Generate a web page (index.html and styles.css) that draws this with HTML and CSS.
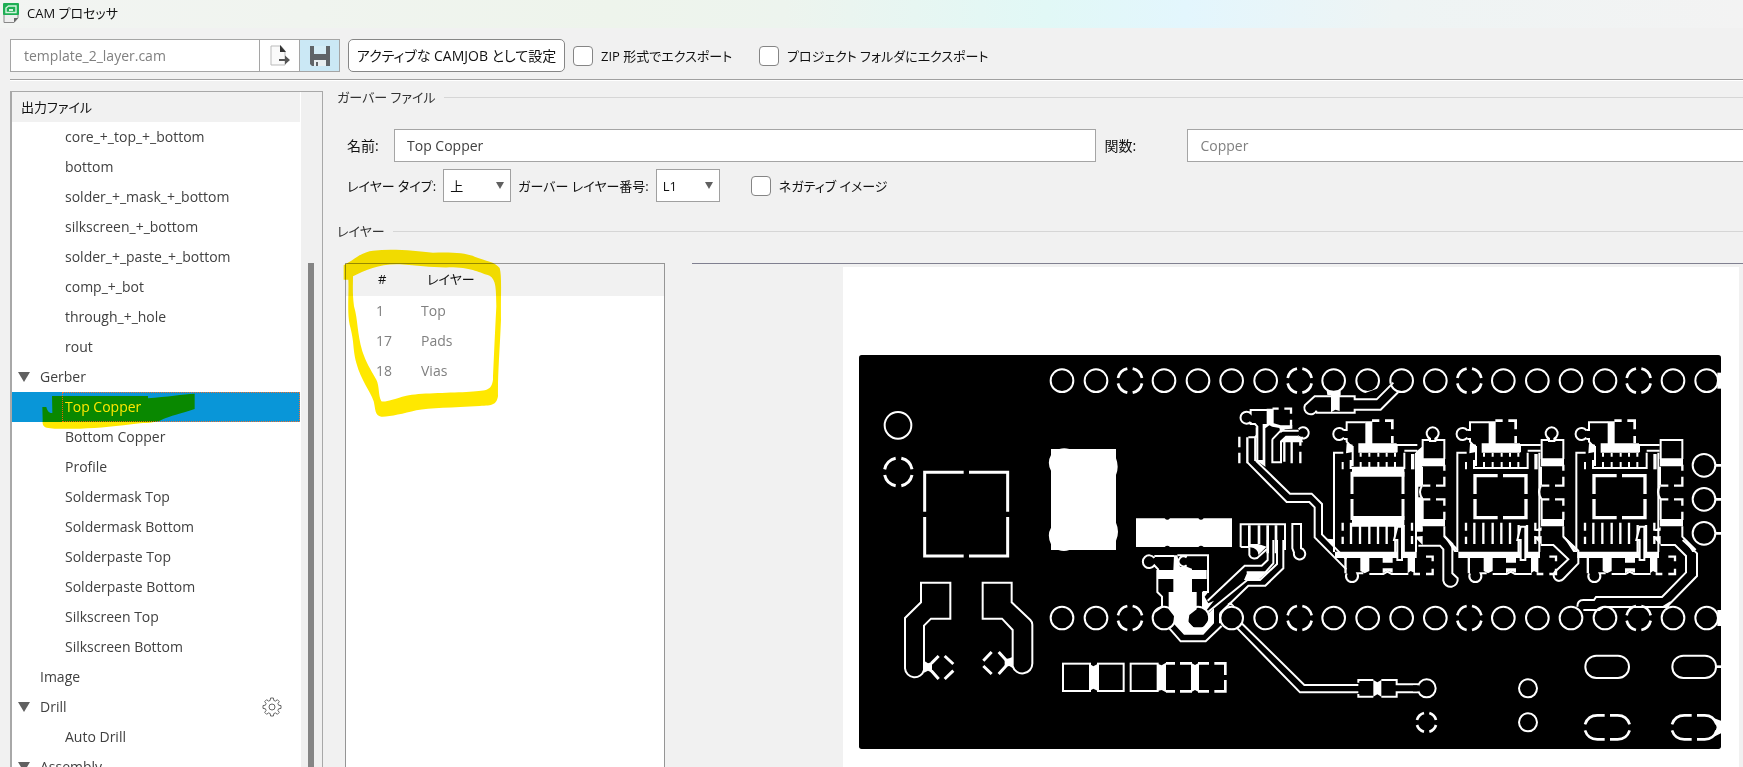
FILE: index.html
```html
<!DOCTYPE html>
<html lang="ja">
<head>
  <meta charset="UTF-8" />
  <meta name="viewport" content="width=device-width, initial-scale=1.0" />
  <title>CAM プロセッサ</title>
  <link rel="stylesheet" href="styles.css">
</head>
<body>

  <header class="titlebar">
    <svg class="app-icon" viewBox="0 0 16 20">
      <path d="M1 10V19.500H11L15 15V10" fill="#eee" stroke="#888" />
      <path d="M11 19.500V15H15Z" fill="#666" />
      <rect width="16" height="12" rx="1" fill="#1fae54" />
      <path d="M3 9.500V5L5.500 3H13V9.500Z" fill="none" stroke="#d5f5df" stroke-width="1.400" />
      <path d="M6 8V6H10V8Z" fill="#d5f5df" />
    </svg>
    <h1>CAM プロセッサ</h1>
  </header>

  <div class="toolbar">
    <div class="file-box">
      <input type="text" class="file-name" value="template_2_layer.cam" aria-label="CAM ファイル" readonly />
      <button class="icon-btn" aria-label="ファイルを開く">
        <svg width="20" height="22" viewBox="0 0 20 22">
          <path d="M1 1H11L15 6V20H1Z" fill="#fafafa" stroke="#bbb" />
          <path d="M10 0L16 7H10Z" fill="#333" />
          <path d="M9 14H15V10.500L20 15L15 19.500V16H9Z" fill="#555" />
        </svg>
      </button>
      <button class="icon-btn active" aria-label="保存">
        <svg width="20" height="20" viewBox="0 0 20 20">
          <path d="M0 0H20V20H2L0 18Z" fill="#606468" />
          <path d="M4 0H16V8H4Z" fill="#d4ecf6" />
          <path d="M4 14H16V20H4Z" fill="#e8eef0" />
          <path d="M6 16H8V20H6Z" fill="#606468" />
        </svg>
      </button>
    </div>
    <button class="btn">アクティブな CAMJOB として設定</button>
    <label class="check check-zip"><input type="checkbox" />ZIP 形式でエクスポート</label>
    <label class="check"><input type="checkbox" />プロジェクト フォルダにエクスポート</label>
  </div>

  <main class="content">
    <!-- Output files -->
    <nav class="tree">
      <div class="tree-list">
        <h2>出力ファイル</h2>
        <ul>
          <li>core_+_top_+_bottom</li>
          <li>bottom</li>
          <li>solder_+_mask_+_bottom</li>
          <li>silkscreen_+_bottom</li>
          <li>solder_+_paste_+_bottom</li>
          <li>comp_+_bot</li>
          <li>through_+_hole</li>
          <li>rout</li>
          <li class="group open">Gerber</li>
          <li class="selected"><span>Top Copper</span>
            <svg class="marker marker-row" width="200" height="50" viewBox="0 0 600 150">
              <path d="M127 81H139C142 95 150 100 157 99L156 48H444V55C500 50 550 43 584 41V87C540 102 510 108 490 117C470 128 450 128 420 130C350 138 300 145 240 146C190 147 160 147 140 143C128 140 127 130 128 120Z" />
            </svg>
          </li>
          <li>Bottom Copper</li>
          <li>Profile</li>
          <li>Soldermask Top</li>
          <li>Soldermask Bottom</li>
          <li>Solderpaste Top</li>
          <li>Solderpaste Bottom</li>
          <li>Silkscreen Top</li>
          <li>Silkscreen Bottom</li>
          <li class="group">Image</li>
          <li class="group open">Drill
            <button class="gear" aria-label="設定">
              <svg width="20" height="20" viewBox="0 0 20 20" fill="none" stroke="#666">
                <path d="M8.600 1H11.400L11.800 3.400L13.500 4.100L15.400 2.700L17.300 4.600L15.900 6.500L16.600 8.200L19 8.600V11.400L16.600 11.800L15.900 13.500L17.300 15.400L15.400 17.300L13.500 15.900L11.800 16.600L11.400 19H8.600L8.200 16.600L6.500 15.900L4.600 17.300L2.700 15.400L4.100 13.500L3.400 11.800L1 11.400V8.600L3.400 8.200L4.100 6.500L2.700 4.600L4.600 2.700L6.500 4.100L8.200 3.400Z" />
                <circle cx="10" cy="10" r="3" />
              </svg>
            </button>
          </li>
          <li>Auto Drill</li>
          <li class="group open">Assembly</li>
        </ul>
      </div>
      <div class="scrollbar"><div class="thumb"></div></div>
    </nav>

    <div class="details">
      <section>
        <h3 class="legend">ガーバー ファイル</h3>
        <div class="row row-name">
          <label for="name">名前:</label>
          <input type="text" id="name" class="field field-name" value="Top Copper" />
          <label for="func" class="label-func">関数:</label>
          <input type="text" id="func" class="field field-func" value="Copper" readonly />
        </div>
        <div class="row row-type">
          <label for="type">レイヤー タイプ:</label>
          <select id="type" class="select-type"><option>上</option><option>下</option></select>
          <label for="number">ガーバー レイヤー番号:</label>
          <select id="number" class="select-number"><option>L1</option><option>L2</option></select>
          <label class="check check-negative"><input type="checkbox" />ネガティブ イメージ</label>
        </div>
      </section>

      <section class="layers">
        <h3 class="legend">レイヤー</h3>
        <div class="layers-body">
          <div class="layer-panel">
            <table>
              <thead><tr><th>#</th><th>レイヤー</th></tr></thead>
              <tbody>
                <tr><td>1</td><td>Top</td></tr>
                <tr><td>17</td><td>Pads</td></tr>
                <tr><td>18</td><td>Vias</td></tr>
              </tbody>
            </table>
            <svg class="marker marker-table" width="160" height="170" viewBox="70 505 480 510">
              <path fill-rule="evenodd" d="M72 600V557L95 543C120 525 140 515 160 513C220 506 290 514 340 519C400 517 440 520 465 531C500 545 525 545 540 565C547 590 543 640 544 720C540 820 534 880 535 950C530 975 520 978 480 979C400 984 330 984 290 992C250 1002 210 1012 185 1011C165 1008 168 990 162 965C150 930 125 905 110 850C98 800 105 790 90 735C82 700 88 640 86 600ZM100 590C140 570 180 552 240 554C300 558 340 565 400 563C460 565 480 580 510 588C530 600 529 630 530 680C527 740 522 850 520 900C515 935 500 932 440 937C380 940 300 940 260 948C220 958 200 968 185 965C175 945 180 920 170 900C150 865 140 850 128 815C112 760 115 720 103 680C98 640 100 620 100 590Z" />
            </svg>
          </div>

          <!-- Copper preview -->
          <div class="preview">
            <svg class="board" width="896" height="500" viewBox="-591 -219 2688 1500">
              <defs>
                <circle id="pad" r="34" />
                <g id="thermal" stroke-width="8">
                  <path d="M8 -36A37 37 0 0 1 36 -8M36 8A37 37 0 0 1 8 36M-8 36A37 37 0 0 1 -36 8M-36 -8A37 37 0 0 1 -8 -36" />
                </g>
                <g id="header">
                  <use href="#pad" x="66" /><use href="#pad" x="168" /><use href="#thermal" x="270" /><use href="#pad" x="372" />
                  <use href="#pad" x="474" /><use href="#pad" x="575" /><use href="#pad" x="677" /><use href="#thermal" x="779" />
                  <use href="#pad" x="881" /><use href="#pad" x="983" /><use href="#pad" x="1085" /><use href="#pad" x="1186" />
                  <use href="#thermal" x="1288" /><use href="#pad" x="1390" /><use href="#pad" x="1492" /><use href="#pad" x="1593" />
                  <use href="#pad" x="1695" /><use href="#thermal" x="1796" /><use href="#pad" x="1899" /><use href="#pad" x="2000" />
                  <rect class="w" x="2032" y="-24" width="12" height="48" />
                </g>
                <!-- driver chip with its capacitors -->
                <g id="chip">
                  <path d="M230 338H202V636M232 270H240V247H297M232 297H240V305L252 318" />
                  <path d="M232 293A18 18 0 1 1 232 271" />
                  <path class="w" d="M296 244H317V310H390V338H275V310H296ZM240 310L258 314V336L238 340Z" />
                  <path stroke-width="8" d="M316 242H338M355 242H377V268M377 288V310" />
                  <path stroke-width="6" d="M282 338V350M308 338V350M335 338V350M360 338V350M385 338V350M282 366V382M308 366V382M335 366V382M360 366V382M385 366V382M228 366V388M252 360V384H413V338M258 318V378" />
                  <path d="M390 337V315H452M413 332H452M448 338V636" />
                  <path stroke-width="10" d="M438 342V388" />
                  <path stroke-width="7" d="M228 548V572M228 590V612M253 548V612M280 548V612M308 548V612M334 548V612M360 548V612M386 555V636M411 555V636M436 548V572M436 588V612" />
                  <path class="w" d="M205 635H450V654H205ZM233 640H240V700H233ZM281 650H308V693L294 700L281 693ZM348 650H378V668H348ZM348 685H378V698L362 692L348 700ZM423 650H445V700L432 693L423 700Z" />
                  <path class="k" d="M382 600H392V660H406V560H392Z" />
                  <path d="M308 702H350L362 695L375 702H425" />
                  <path d="M240 700A18 18 0 1 0 272 700H290" />
                  <path stroke-width="7" d="M440 702H460M478 702H498V686M478 650H498V664" />
                </g>
                <g id="qfn" stroke-width="10">
                  <path d="M323 407H255V462M255 477V533H323M339 407H408V462M408 477V533H339" />
                </g>
                <!-- output capacitors right of a chip -->
                <g id="caps">
                  <path d="M455 357V300H520V357M453 380V437" />
                  <path class="w" d="M453 355H522V379H453ZM453 537H522V559H453Z" />
                  <path stroke-width="7" d="M520 374V392M520 410V437H495M478 437H455M455 478H478M495 478H520V497M520 515V540" />
                  <path d="M453 437Q440 458 455 478V540M437 570H452M520 559V590L560 630" />
                  <path class="w" d="M432 570L455 562V572ZM432 590L455 588V615L440 600ZM520 590L535 602L560 636H550Z" />
                </g>
                <g id="via-up"><path class="k" d="M477 296A18 18 0 1 1 493 296V303H477Z" /><path class="w" d="M465 300L476 292V300ZM494 300V292L505 300Z" /></g>
                <g id="slot-thermal" stroke-width="8">
                  <path d="M585 553Q594 526 622 526H644M660 526H683Q710 526 719 553M719 571Q710 598 683 598H660M644 598H622Q594 598 585 571" />
                </g>
              </defs>

              <rect class="k edge" x="-543" y="45" width="2586" height="1182" rx="8" />
              <g class="copper">
                <use href="#header" y="122" />
                <use href="#header" y="834" />

                <!-- left side: power input -->
                <g transform="translate(-600 0)">
                  <circle cx="174" cy="256" r="40" />
                  <path stroke-width="9" d="M184 355A42 42 0 0 1 216 388M216 405A42 42 0 0 1 184 437M167 437A42 42 0 0 1 134 405M134 388A42 42 0 0 1 167 355" />
                  <path stroke-width="9" d="M371 397H254V515M254 531V648H371M387 397H503V515M503 531V648H387" />
                  <path d="M243 728V787L195 834V985A29 29 0 0 0 252 990V857L273 836H331V728Z" />
                  <path d="M515 728V787L571 840Q577 846 577 854V970A30 30 0 0 1 518 978V870L486 836H428V728Z" />
                  <path stroke-width="9" d="M274 970L296 948M314 948L340 972M340 992L314 1017M296 1017L274 992M430 962L455 936M430 978L455 1002M476 936L500 962M476 1002L500 976" />
                  <path class="w" d="M252 962L264 970L276 966V998L264 992L252 998ZM494 958L508 955L519 950V985L508 978L494 980Z" />
                </g>

                <!-- crystal and regulator -->
                <path class="w" d="M33 327H58Q72 322 88 327H228V355Q238 380 228 405V548Q240 575 228 602V630H88Q72 636 55 630H33V613Q20 585 33 563V392Q20 368 33 345Z" />
                <path class="w" d="M288 535H374Q382 544 390 535H475Q483 544 491 535H576V621H491Q483 613 475 621H390Q382 613 374 621H288Z" />

                <!-- usb bridge -->
                <path d="M632 246A18 18 0 1 1 632 220V210H682M632 246V252H645L652 260V363H672V255M625 292H646L650 285V262" />
                <path class="w" d="M680 206H701V250L722 256H757V266L735 268L722 280L718 264L697 260L688 256L676 265V380L668 368V252H680Z" />
                <path stroke-width="7" d="M701 209V206H716M733 206H753V221M753 239V258M598 290V322M598 338V370M755 300V370M781 300V317M781 335V370M622 292V370M646 290V363M733 300V365" />
                <path d="M697 298V367H723V304L738 290H775M697 298L722 272H776" />
                <path d="M776 268A17 17 0 1 1 780 293L785 304H725" />
                <path class="w" d="M728 298L740 290H790L785 304H728Z" />
                <path d="M623 368L740 486H808L824 502V592L919 688M648 362L750 461H815L846 492V583L919 658M882 610V338" />
                <path class="w" d="M646 360L676 380L672 360ZM860 596L882 598V622Z" />

                <!-- reset line -->
                <path class="k" d="M830 212A18 18 0 1 1 795 195L824 169H944V178H1010L1060 128M828 218H944V209H1022L1075 156" />
                <path class="w" d="M860 152H902V165L899 168V213L886 209L873 217V166L862 165Z" />

                <!-- chips -->
                <g transform="translate(1050 0)">
                  <use href="#chip" x="-370" />
                  <use href="#chip" />
                  <use href="#chip" x="357" />
                  <use href="#qfn" />
                  <use href="#qfn" x="357" />
                  <use href="#caps" x="-357" />
                  <use href="#caps" />
                  <use href="#caps" x="357" />
                  <use href="#via-up" x="-357" />
                  <use href="#via-up" />
                  <path class="w" d="M-114 380H43V410H-114ZM-114 528H43V560H-114ZM78 335L96 320V440H85V472H98V575H78Z" />
                  <path stroke-width="9" d="M-114 395V462M-114 477V540M39 395V462M39 477V540" />
                  <path d="M85 617H150L160 628V722A18 18 0 1 0 203 715L187 700V612L163 588" />
                  <path d="M452 615H490L535 658L495 695A16 16 0 1 0 520 717L565 670V632L520 590" />
                  <path d="M812 615H855L888 648V697L816 771H618L612 780H580Q562 780 562 800M878 600L921 640V708L830 801H640L628 810H580" />
                  <path class="w" d="M815 800L842 783L836 802Z" />
                  <circle cx="942" cy="376" r="34" /><circle cx="942" cy="478" r="34" /><circle cx="942" cy="580" r="34" />
                  <path stroke-width="8" d="M976 376H993M976 478H993M976 580H993" />
                </g>

                <!-- fine pitch connector -->
                <path d="M602 621V553H735V630M602 621H628M757 552H783V625A17 17 0 1 1 762 638L757 625Z" />
                <path stroke-width="8" d="M628 556V622M657 556V612M683 556V640M708 556V640" />
                <path d="M628 622V645A17 17 0 0 0 658 648L680 628" />
                <path class="w" d="M630 612H655L680 620L655 645Q655 625 630 622Z" />

                <g transform="translate(0 600)">
                  <path class="w" d="M352 90H400L402 46H412L420 80H440L456 86V90H500V117H456V156H470V208L448 225L445 245L460 262H490L506 240L503 222L522 205V250L490 284H432L400 250L402 228L386 208V156H400V117H352Z" />
                  <path class="w" d="M486 156H505L494 170L505 190L522 182L500 210L486 205Z" />
                  <path d="M343 54A19 19 0 1 0 343 76L356 90M343 48H402M440 52A15 15 0 1 0 440 76M412 46H504V156H488M352 90V156L366 170V200L345 215M458 90V117" />
                  <path d="M388 265L422 304H497L545 258M503 182L614 77H665L683 60V0M540 220L625 137H676L730 85V0M540 220V250" />
                  <path d="M505 215L622 120H660L711 72V0M700 0V70L676 97H620" />
                  <path class="w" d="M622 97H682L655 120H612ZM562 192L572 185L585 200Z" />
                  <path d="M590 263L780 457H955M605 250L793 435H955" />
                  <path d="M955 428V420H1000M955 462V470H1000M1024 420H1070V433H1135M1024 470H1070V457H1135" />
                  <path class="w" d="M1000 420L1012 427L1024 420V470L1012 463L1000 470Z" />
                  <circle cx="1160" cy="445" r="27" />
                  <path class="k none" d="M1128 436V454" />
                  <rect x="69" y="371" width="81" height="82" /><rect x="174" y="371" width="77" height="82" /><rect x="272" y="371" width="81" height="82" />
                  <path class="w" d="M148 371L160 379L174 371V453L160 446L148 453ZM352 371L365 376L378 368V457L365 450L352 453ZM453 368L465 375L477 368V457L465 450L453 457Z" />
                  <path stroke-width="8" d="M378 370H405M420 370H456M378 454H405M420 454H456M474 370H507M523 370H556V405M556 420V454H523M507 454H474" />
                </g>

                <!-- mounting slots -->
                <g transform="translate(1050 600)">
                  <rect x="586" y="347" width="131" height="67" rx="33" /><rect x="847" y="347" width="131" height="67" rx="33" />
                  <path stroke-width="8" d="M978 380H993" />
                  <use href="#slot-thermal" />
                  <use href="#slot-thermal" x="261" />
                  <path class="w" d="M972 535L993 542V580L972 590L980 562Z" />
                  <circle cx="414" cy="445" r="27" /><circle cx="414" cy="547" r="27" />
                  <path stroke-width="8" d="M118 519A30 30 0 0 1 138 540M138 555A30 30 0 0 1 118 575M102 575A30 30 0 0 1 81 555M81 540A30 30 0 0 1 102 519" />
                </g>
              </g>
            </svg>
          </div>
        </div>
      </section>
    </div>
  </main>

</body>
</html>
```

FILE: styles.css
```css
* { margin: 0; padding: 0; box-sizing: border-box; }
body, html {
  height: 100%;
  overflow: hidden;
}
body {
  display: flex;
  flex-direction: column;
  background: #f1f1f1;
  color: #111;
  font-family: "Open Sans", "Noto Sans CJK JP", sans-serif;
  font-size: 14px;
  line-height: 20px;
  font-feature-settings: "palt";
}
input, select, button { font: inherit; font-feature-settings: inherit; color: inherit; }
h1, h2, h3 { font-size: 13px; font-weight: normal; }
ul { list-style: none; }

.titlebar {
  display: flex;
  flex: none;
  align-items: center;
  gap: 8px;
  height: 28px;
  padding: 0 3px 2px;
  background: linear-gradient(90deg, #f2f4f2 0%, #eef4ec 35%, #edf4ee 45%, #e1f8f6 60%, #e3f6fd 68%, #eef4f4 80%, #f3f3f3 100%);
}
.app-icon { width: 16px; height: 20px; }

.toolbar {
  display: flex;
  flex: none;
  align-items: center;
  margin-left: 10px;
  padding: 11px 0 7px;
  border-bottom: 1px solid #a0a0a0;
  box-shadow: 0 1px #fff;
}
.file-box {
  display: flex;
  width: 330px;
  height: 33px;
  margin-right: 8px;
  border: 1px solid #a5a5a5;
  background: #fff;
}
.file-name {
  flex: 1;
  min-width: 0;
  padding: 0 13px;
  border: none;
  background: #fff;
  color: #808080;
}
.icon-btn {
  display: flex;
  width: 40px;
  align-items: center;
  justify-content: center;
  border: none;
  border-left: 1px solid #a5a5a5;
  background: #fff;
}
.icon-btn.active { background: #cbe8f5; }
.btn {
  height: 33px;
  width: 217px;
  margin-right: 8px;
  border: 1px solid #868686;
  border-radius: 5px;
  background: #fff;
  white-space: nowrap;
}
.check {
  display: flex;
  align-items: center;
  gap: 8px;
  font-size: 13px;
  white-space: nowrap;
}
.check input {
  appearance: none;
  width: 20px;
  height: 20px;
  border: 1px solid #858585;
  border-radius: 4px;
  background: #fff;
}
.check-zip { width: 186px; }

.content {
  display: flex;
  flex: 1;
  min-height: 0;
}

.tree {
  display: flex;
  flex: none;
  width: 313px;
  margin: 11px 0 0 10px;
  border: 1px solid #a8a8a8;
  border-bottom: none;
  border-left-width: 2px;
  overflow: hidden;
}
.tree-list { flex: 1; background: #fff; color: #404040; }
.tree h2 {
  height: 30px;
  padding: 5px 9px;
  background: #f1f1f1;
  color: #111;
}
.tree li {
  display: flex;
  position: relative;
  align-items: center;
  height: 30px;
  padding-left: 53px;
}
.tree .group { padding-left: 28px; }
.tree .open { padding-left: 6px; }
.open::before {
  content: "";
  margin-right: 10px;
  border: 6px solid transparent;
  border-top: 10px solid #606060;
  border-bottom: none;
}
.tree .selected {
  padding-left: 50px;
  background: #0996d8;
  color: #fff;
}
.selected span {
  flex: 1;
  height: 30px;
  padding: 4px 2px;
  border: 1px dotted #f07030;
}
.gear {
  display: flex;
  margin-left: auto;
  margin-right: 18px;
  border: none;
  background: none;
}
.scrollbar {
  width: 22px;
  padding: 171px 8px 0 7px;
  border-left: 1px solid #fff;
  background: #f0f0f0;
}
.thumb { width: 6px; height: 100%; background: #858585; }

/* Highlighter strokes */
.marker {
  position: absolute;
  fill: #ffe800;
  mix-blend-mode: multiply;
  pointer-events: none;
  z-index: 1;
}
.marker-row { left: -12px; top: -12px; }
.marker-table { left: -3px; top: -16px; }

.details {
  display: flex;
  flex: 1;
  flex-direction: column;
  min-width: 0;
  padding: 7px 0 0 14px;
}
.legend {
  display: flex;
  align-items: center;
  gap: 8px;
  color: #333;
}
.legend::after {
  content: "";
  flex: 1;
  height: 1px;
  background: #d6d6d6;
}
.row {
  display: flex;
  align-items: center;
  height: 33px;
  padding-left: 10px;
  white-space: nowrap;
}
.row-name { margin-top: 22px; gap: 8px; }
.row-type { margin-top: 7px; gap: 7px; font-size: 13px; }
.row-name > label { width: 39px; }
.row-name .label-func { width: 75px; }
.field {
  height: 33px;
  min-width: 0;
  padding: 0 12px;
  border: 1px solid #a5a5a5;
  background: #fff;
  color: #404040;
}
.field-name { flex: 705; }
.field-func { flex: 553; border-right: none; color: #808080; }
select {
  appearance: none;
  height: 33px;
  padding: 0 6px;
  border: 1px solid #a0a0a0;
  background: #fff url("data:image/svg+xml,%3Csvg xmlns='http://www.w3.org/2000/svg' width='8' height='7'%3E%3Cpath d='M0 0H8L4 7Z' fill='%23606060'/%3E%3C/svg%3E") no-repeat right 6px center;
}
.select-type { width: 68px; }
.select-number { width: 64px; }
.check-negative { margin-left: 24px; }

.layers {
  display: flex;
  flex: 1;
  flex-direction: column;
  min-height: 0;
  padding-top: 19px;
}
.layers-body {
  display: flex;
  flex: 1;
  min-height: 0;
  gap: 27px;
  padding: 22px 0 0 8px;
}
.layer-panel {
  position: relative;
  flex: none;
  width: 320px;
  border: 1px solid #959595;
  border-bottom: none;
  background: #fff;
}
table { width: 100%; border-collapse: collapse; }
th, td { height: 30px; text-align: left; }
th { padding-bottom: 2px; height: 32px; background: #f1f1f1; color: #111; font-size: 13px; font-weight: normal; }
td { color: #808080; }
th:first-child { width: 75px; padding-left: 32px; }
td:first-child { padding-left: 30px; }
th + th { padding-left: 6px; }

.preview {
  display: flex;
  flex: 1;
  min-width: 0;
  align-items: flex-start;
  justify-content: flex-end;
  padding: 3px 4px 0 0;
  border-top: 1px solid #808090;
}
.board { flex: none; background: #fff; }
.copper { fill: none; stroke: #fff; stroke-width: 6; }
.w { fill: #fff; stroke: none; }
.k { fill: #000; }
.edge { stroke: none; }
.none { stroke: #000; stroke-width: 18; }
```
